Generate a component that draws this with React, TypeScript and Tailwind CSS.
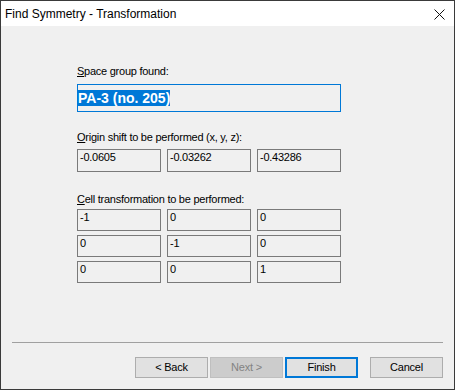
const dlg = { fontFamily: '"Liberation Sans", Arial, sans-serif' }

function Field({ value, h = 'h-[22px]' }: { value: string; h?: string }) {
  return (
    <div
      className={`${h} w-[84px] border border-[#7a7a7a] bg-[#f0f0f0] px-[2px] pt-[1px] text-[11px] leading-[13px] tracking-[-0.25px] text-black`}
    >
      {value}
    </div>
  )
}

function Btn({ label, kind = 'normal' }: { label: string; kind?: 'normal' | 'disabled' | 'default' }) {
  const cls =
    kind === 'disabled'
      ? 'border border-[#bfbfbf] bg-[#cccccc] text-[#838383]'
      : kind === 'default'
        ? 'border-2 border-[#0078d7] bg-[#e1e1e1] text-black'
        : 'border border-[#adadad] bg-[#e1e1e1] text-black'
  return (
    <div className={`flex h-[21px] w-[73px] items-center justify-center text-[11px] tracking-[-0.2px] ${cls}`}>
      {label}
    </div>
  )
}

function Label({ accel, rest }: { accel: string; rest: string }) {
  return (
    <p className="text-[11px] leading-[13px] tracking-[-0.25px] text-black">
      <span className="underline underline-offset-[1px]">{accel}</span>
      {rest}
    </p>
  )
}

export default function App() {
  const origin = ['-0.0605', '-0.03262', '-0.43286']
  const cell = [
    ['-1', '0', '0'],
    ['0', '-1', '0'],
    ['0', '0', '1'],
  ]

  return (
    <div className="flex h-[390px] w-[455px] flex-col border border-[#3a3a3a] bg-[#f0f0f0]" style={dlg}>
      <div className="flex h-[25px] items-center justify-between bg-white pl-[4px] pr-[9px]">
        <span className="text-[12px] text-black">Find Symmetry - Transformation</span>
        <svg width="11" height="11" viewBox="0 0 11 11" className="mt-[2px]">
          <path d="M0.5 0.5 L10.5 10.5 M10.5 0.5 L0.5 10.5" stroke="#111" strokeWidth="1" />
        </svg>
      </div>

      <div className="flex flex-1 flex-col">
        <div className="ml-[76px] mt-[39px] w-[264px]">
          <Label accel="S" rest="pace group found:" />
          <div className="mt-[6px] h-[28px] border border-[#0078d7] bg-[#f0f0f0] pt-[1px]">
            <span className="inline-block h-[16px] bg-[#0078d7] text-[14px] font-bold leading-[16px] text-white">
              PA-3 (no. 205)
            </span>
          </div>

          <div className="mt-[19px]">
            <Label accel="O" rest="rigin shift to be performed (x, y, z):" />
          </div>
          <div className="mt-[5px] flex gap-[6px]">
            {origin.map((v) => (
              <Field key={v} value={v} h="h-[23px]" />
            ))}
          </div>

          <div className="mt-[21px]">
            <Label accel="C" rest="ell transformation to be performed:" />
          </div>
          <div className="mt-[3px] flex flex-col gap-[4px]">
            {cell.map((row, i) => (
              <div key={i} className="flex gap-[6px]">
                {row.map((v, j) => (
                  <Field key={j} value={v} />
                ))}
              </div>
            ))}
          </div>
        </div>

        <div className="flex-1" />

        <div className="mx-[11px] h-px bg-[#a0a0a0]" />
        <div className="mb-[11px] mt-[14px] flex pl-[134px]">
          <div className="flex gap-[2px]">
            <Btn label="< Back" />
            <Btn label="Next >" kind="disabled" />
            <Btn label="Finish" kind="default" />
          </div>
          <div className="ml-[12px]">
            <Btn label="Cancel" />
          </div>
        </div>
      </div>
    </div>
  )
}
